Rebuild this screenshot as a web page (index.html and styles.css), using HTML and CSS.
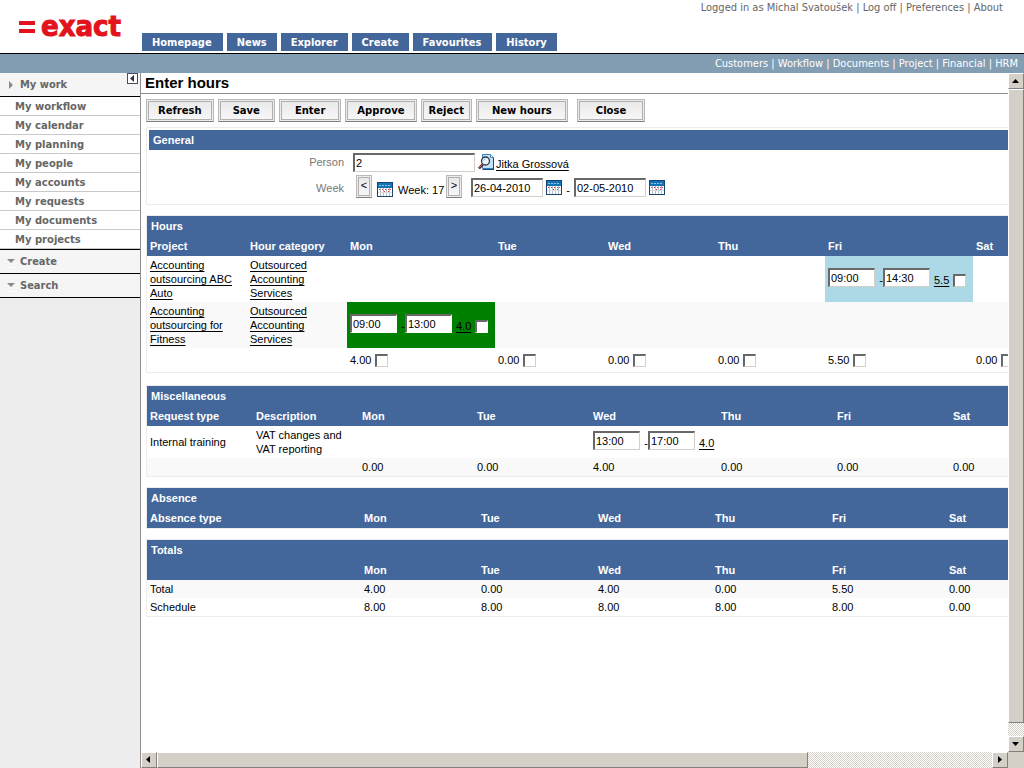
FILE: index.html
```html
<!DOCTYPE html>
<html lang="en">
<head>
<meta charset="utf-8">
<title>Enter hours</title>
<link rel="stylesheet" href="styles.css">
</head>
<body>
<svg class="sprite" aria-hidden="true">
  <symbol id="calendar" viewBox="0 0 16 15">
    <rect width="16" height="15" fill="#17456f"/>
    <rect x="1" y="1" width="14" height="5" fill="#1673b5"/>
    <path d="M2 3.500h12" stroke="#8cc4ea" stroke-dasharray="2 1"/>
    <rect x="1" y="6" width="14" height="8" fill="#fff"/>
    <path d="M3.500 6v8M6.500 6v8M9.500 6v8M12.500 6v8" stroke="#b9bec6"/>
    <path d="M1 10.500h14" stroke="#d8dce0"/>
    <path d="M2 7.500h1M5 7.500h1M8 7.500h1M11 7.500h1M7 9.500h1M11 9.500h1M13 7.500h1" stroke="#c8485a"/>
  </symbol>
  <symbol id="lookup" viewBox="0 0 16 16">
    <path d="M4.500.500h8l3 3v11h-11z" fill="#c4e2f8" stroke="#3d80b5"/>
    <path d="M4.500 15.500h11.500M15.500 4v11" stroke="#134a7c" fill="none"/>
    <path d="M12.500.500v3h3" fill="#fff" stroke="#3d80b5"/>
    <circle cx="7.500" cy="7" r="4" fill="#e9f7ff" stroke="#30343c" stroke-width="1.300"/>
    <path d="M5.500 7a2 2 0 0 1 2-2" stroke="#7fc0ee" fill="none"/>
    <path d="M4.500 10.500 1 14.500" stroke="#5a1712" stroke-width="2.600"/>
    <path d="M4.300 10.500 1.200 13.800" stroke="#d9765c"/>
  </symbol>
</svg>

<header class="top">
  <a class="logo" href="#"><svg width="16" height="13" viewBox="0 0 16 13" aria-hidden="true"><path d="M0 0h16v4H0zM0 8h16v4H0z" fill="#e2131d"/></svg><span>exact</span></a>
  <nav class="tabs">
    <a href="#">Homepage</a><a href="#">News</a><a href="#">Explorer</a><a href="#">Create</a><a href="#">Favourites</a><a href="#">History</a>
  </nav>
  <div class="account">Logged in as Michal Svatoušek | <a href="#">Log off</a> | <a href="#">Preferences</a> | <a href="#">About</a></div>
</header>
<nav class="modules"><a href="#">Customers</a> | <a href="#">Workflow</a> | <a href="#">Documents</a> | <a href="#">Project</a> | <a href="#">Financial</a> | <a href="#">HRM</a></nav>

<div class="body">
  <aside class="side">
    <h2 class="group"><svg width="10" height="12" viewBox="0 0 10 12" aria-hidden="true"><path d="M3 2v8l4-4z" fill="#8a8a8a"/></svg>My work
      <button class="collapse" aria-label="Collapse menu"><svg width="11" height="11" viewBox="0 0 11 11" aria-hidden="true"><rect x=".5" y=".5" width="10" height="10" fill="#fff" stroke="#4a4a60"/><path d="M7 2v7L3 5.500z" fill="#2e2e44"/></svg></button>
    </h2>
    <ul class="links">
      <li><a href="#">My workflow</a></li>
      <li><a href="#">My calendar</a></li>
      <li><a href="#">My planning</a></li>
      <li><a href="#">My people</a></li>
      <li><a href="#">My accounts</a></li>
      <li><a href="#">My requests</a></li>
      <li><a href="#">My documents</a></li>
      <li><a href="#">My projects</a></li>
    </ul>
    <h2 class="group ruled"><svg width="10" height="12" viewBox="0 0 10 12" aria-hidden="true"><path d="M1 3h8L5 7z" fill="#8a8a8a"/><path d="M0 11.500h10" stroke="#fff"/></svg>Create</h2>
    <h2 class="group"><svg width="10" height="12" viewBox="0 0 10 12" aria-hidden="true"><path d="M1 3h8L5 7z" fill="#8a8a8a"/><path d="M0 11.500h10" stroke="#fff"/></svg>Search</h2>
  </aside>

  <main class="pane">
    <div class="view">
      <h1>Enter hours</h1>
      <div class="content">
        <div class="actions">
          <button>Refresh</button><button>Save</button><button>Enter</button><button>Approve</button><button class="tight">Reject</button><button class="wide">New hours</button><button class="apart">Close</button>
        </div>

        <section class="general">
          <h2>General</h2>
          <div class="field">
            <label for="person">Person</label>
            <input id="person" class="person" value="2">
            <svg class="icon-lookup" aria-hidden="true"><use href="#lookup"/></svg>
            <a class="name" href="#">Jitka Grossová</a>
          </div>
          <div class="field week">
            <label for="from">Week</label>
            <button class="step" aria-label="Previous week">&lt;</button>
            <svg class="icon-cal low" aria-hidden="true"><use href="#calendar"/></svg>
            <span class="number">Week: 17</span>
            <button class="step next" aria-label="Next week">&gt;</button>
            <input id="from" class="date" value="26-04-2010">
            <svg class="icon-cal" aria-hidden="true"><use href="#calendar"/></svg>
            <span class="dash">-</span>
            <input class="date" aria-label="Week end" value="02-05-2010">
            <svg class="icon-cal" aria-hidden="true"><use href="#calendar"/></svg>
          </div>
        </section>

        <table class="sheet hours">
          <colgroup><col class="w100"><col class="w100"><col class="w148"><col class="w110"><col class="w110"><col class="w110"><col class="w148"><col></colgroup>
          <thead>
            <tr><th class="title" colspan="8">Hours</th></tr>
            <tr><th>Project</th><th>Hour category</th><th>Mon</th><th>Tue</th><th>Wed</th><th>Thu</th><th>Fri</th><th>Sat</th></tr>
          </thead>
          <tbody>
            <tr>
              <td><a href="#">Accounting outsourcing ABC Auto</a></td><td><a href="#">Outsourced Accounting Services</a></td>
              <td></td><td></td><td></td><td></td>
              <td class="open"><div class="entry"><input aria-label="Start" value="09:00"><span>-</span><input aria-label="End" value="14:30"><a href="#">5.5</a><input type="checkbox" aria-label="Select"></div></td>
              <td></td>
            </tr>
            <tr class="alt">
              <td><a href="#">Accounting outsourcing for Fitness</a></td><td><a href="#">Outsourced Accounting Services</a></td>
              <td class="done"><div class="entry"><input aria-label="Start" value="09:00"><span>-</span><input aria-label="End" value="13:00"><a href="#">4.0</a><input type="checkbox" aria-label="Select"></div></td>
              <td></td><td></td><td></td><td></td><td></td>
            </tr>
            <tr class="sum">
              <td></td><td></td>
              <td><label>4.00 <input type="checkbox"></label></td>
              <td><label>0.00 <input type="checkbox"></label></td>
              <td><label>0.00 <input type="checkbox"></label></td>
              <td><label>0.00 <input type="checkbox"></label></td>
              <td><label>5.50 <input type="checkbox"></label></td>
              <td><label>0.00 <input type="checkbox"></label></td>
            </tr>
          </tbody>
        </table>

        <table class="sheet">
          <colgroup><col class="w106"><col class="w106"><col class="w115"><col class="w116"><col class="w128"><col class="w116"><col class="w116"><col></colgroup>
          <thead>
            <tr><th class="title" colspan="8">Miscellaneous</th></tr>
            <tr><th>Request type</th><th>Description</th><th>Mon</th><th>Tue</th><th>Wed</th><th>Thu</th><th>Fri</th><th>Sat</th></tr>
          </thead>
          <tbody>
            <tr>
              <td>Internal training</td><td>VAT changes and VAT reporting</td><td></td><td></td>
              <td><div class="entry"><input aria-label="Start" value="13:00"><span>-</span><input aria-label="End" value="17:00"><a href="#">4.0</a></div></td>
              <td></td><td></td><td></td>
            </tr>
            <tr class="alt"><td></td><td></td><td>0.00</td><td>0.00</td><td>4.00</td><td>0.00</td><td>0.00</td><td>0.00</td></tr>
          </tbody>
        </table>

        <table class="sheet">
          <colgroup><col class="w214"><col class="w117"><col class="w117"><col class="w117"><col class="w117"><col class="w117"><col></colgroup>
          <thead>
            <tr><th class="title" colspan="7">Absence</th></tr>
            <tr><th>Absence type</th><th>Mon</th><th>Tue</th><th>Wed</th><th>Thu</th><th>Fri</th><th>Sat</th></tr>
          </thead>
        </table>

        <table class="sheet">
          <colgroup><col class="w214"><col class="w117"><col class="w117"><col class="w117"><col class="w117"><col class="w117"><col></colgroup>
          <thead>
            <tr><th class="title" colspan="7">Totals</th></tr>
            <tr><th></th><th>Mon</th><th>Tue</th><th>Wed</th><th>Thu</th><th>Fri</th><th>Sat</th></tr>
          </thead>
          <tbody>
            <tr class="alt"><td>Total</td><td>4.00</td><td>0.00</td><td>4.00</td><td>0.00</td><td>5.50</td><td>0.00</td></tr>
            <tr><td>Schedule</td><td>8.00</td><td>8.00</td><td>8.00</td><td>8.00</td><td>8.00</td><td>0.00</td></tr>
          </tbody>
        </table>
      </div>
    </div>

    <div class="bar vertical" aria-hidden="true">
      <span class="arrow"><svg width="8" height="8" viewBox="0 0 8 8"><path d="M0 6h7L3.500 2z"/></svg></span>
      <span class="track"><span class="thumb"></span></span>
      <span class="arrow"><svg width="8" height="8" viewBox="0 0 8 8"><path d="M0 2h7L3.500 6z"/></svg></span>
    </div>
    <div class="bar horizontal" aria-hidden="true">
      <span class="arrow"><svg width="8" height="8" viewBox="0 0 8 8"><path d="M5 0v7L1 3.500z"/></svg></span>
      <span class="track"><span class="thumb"></span></span>
      <span class="arrow"><svg width="8" height="8" viewBox="0 0 8 8"><path d="M2 0v7l4-3.500z"/></svg></span>
    </div>
    <div class="corner"></div>
  </main>
</div>
</body>
</html>
```
FILE: styles.css
```css
* { box-sizing: border-box; }

body {
  margin: 0;
  height: 100vh;
  display: flex;
  flex-direction: column;
  overflow: hidden;
  background: #fff;
  color: #000;
  font: 11px/14px "Liberation Sans", Arial, sans-serif;
}

h1, h2, ul { margin: 0; padding: 0; }
input, button { font: inherit; color: #000; margin: 0; }
.sprite { display: none; }

/* header */
.top {
  height: 54px;
  flex: none;
  display: flex;
  border-bottom: 1px solid #000;
  font-family: "DejaVu Sans Condensed", Tahoma, sans-serif;
}
.logo {
  width: 142px;
  padding: 11px 0 0 19px;
  display: flex;
  align-items: center;
  align-self: flex-start;
  gap: 6px;
  color: #e2131d;
  font: bold 29px/30px "DejaVu Sans Condensed", Tahoma, sans-serif;
  -webkit-text-stroke: 1px #e2131d;
  text-decoration: none;
}
.logo svg { margin-top: 2px; }
.tabs { display: flex; gap: 4px; align-self: flex-end; padding-bottom: 2px; }
.tabs a {
  padding: 1px 10px 0;
  background: #44679b;
  color: #fff;
  font-weight: bold;
  line-height: 17px;
  text-decoration: none;
}
.tabs a:nth-child(4n + 1) { padding-right: 11px; }
.account { margin-left: auto; padding: 1px 21px 0 0; color: #666; }
.account a, .modules a { color: inherit; text-decoration: none; }
.modules {
  flex: none;
  padding: 1px 6px 0 0;
  background: #839db3;
  color: #fff;
  font-family: "DejaVu Sans Condensed", Tahoma, sans-serif;
  line-height: 18px;
  text-align: right;
}

.body { flex: 1; min-height: 0; display: flex; }

/* side menu */
.side {
  width: 141px;
  flex: none;
  background: #ededed;
  border-right: 1px solid #958c8f;
}
.group {
  position: relative;
  height: 24px;
  display: flex;
  align-items: center;
  gap: 4px;
  padding: 1px 0 0 6px;
  border-bottom: 1px solid #000;
  background: #f5f5f5;
  color: #666;
  font: bold 11px/14px "DejaVu Sans Condensed", Tahoma, sans-serif;
}
.ruled { height: 25px; border-top: 1px solid #000; }
.collapse {
  position: absolute;
  top: 0;
  right: 2px;
  padding: 0;
  border: 0;
  background: none;
  display: flex;
}
.links { list-style: none; background: #fff; }
.links li {
  height: 19px;
  padding: 1px 0 0 15px;
  border-bottom: 1px solid #c9c9c9;
  font: bold 10px/17px "DejaVu Sans", Verdana, sans-serif;
}
.links a { color: #666; text-decoration: none; }

/* main pane */
.pane {
  flex: 1;
  min-width: 0;
  display: grid;
  grid-template: minmax(0, 1fr) 16px / minmax(0, 1fr) 16px;
}
.view { overflow: hidden; }
h1 {
  padding-left: 4px;
  border-bottom: 1px solid #8e8e8e;
  font: bold 15px/20px "Liberation Sans", Arial, sans-serif;
}
.content { min-width: 1112px; padding: 5px; }

.actions { display: flex; gap: 4px; }
.actions button, .step {
  border: 1px solid #b8b8b8;
  border-bottom-color: #808080;
  background: linear-gradient(#e8e8e8, #f8f8f8);
  box-shadow: inset 0 0 0 1px #ececec, inset 0 0 0 2px #b0b0b0;
}
.actions button {
  height: 23px;
  padding: 0 11px;
  font: bold 10px/14px "DejaVu Sans", Verdana, sans-serif;
}
.actions button:nth-child(2) { padding: 0 14px; }
.actions button:nth-child(3) { padding: 0 15px; }
.actions .tight { padding: 0 7px; }
.actions .wide { padding: 0 15px; }
.actions .apart { margin-left: 5px; padding: 0 18px; }

.general {
  margin: 5px 0 10px;
  padding: 2px 2px 3px;
  border: 1px solid #ececec;
}
.general h2 {
  padding-left: 4px;
  background: #44679b;
  color: #fff;
  font: bold 11px/20px "Liberation Sans", Arial, sans-serif;
}
.field { height: 24px; display: flex; align-items: center; }
.field label { width: 195px; margin-right: 9px; color: #777; text-align: right; }
.week { height: 27px; }
.person { width: 122px; margin-right: 3px; }
.date { width: 72px; }
.icon-lookup { width: 16px; height: 16px; margin-right: 2px; }
.name { margin-top: 3px; }
.icon-cal { width: 16px; height: 15px; margin-left: 3px; }
.low { margin: 4px 5px 0; }
.dash { width: 12px; padding-top: 4px; text-align: center; }
.number { width: 48px; padding-top: 4px; }
.step { width: 16px; height: 23px; margin: 0 0 2px 3px; padding: 0 0 4px; line-height: 14px; }
.next { margin: 0 9px 2px 0; }
.sheet a, .name { color: #000; text-decoration: underline; text-underline-offset: 2px; }

input {
  height: 19px;
  padding: 0 1px;
  border: solid;
  border-width: 2px 1px 1px 2px;
  border-color: #686868 #d4d0c8 #d4d0c8 #686868;
  border-radius: 0;
  background: #fff;
  line-height: 14px;
}
input[type="checkbox"] {
  appearance: none;
  flex: none;
  width: 13px;
  height: 13px;
  padding: 0;
}

/* data tables */
.sheet {
  width: 100%;
  margin-bottom: 10px;
  border: 1px solid #ececec;
  border-spacing: 0;
  table-layout: fixed;
}
.hours { margin-bottom: 12px; }
.sheet th {
  height: 20px;
  padding: 0 3px;
  background: #44679b;
  color: #fff;
  text-align: left;
}
.sheet th.title { padding-left: 4px; }
.sheet td { height: 18px; padding: 2px 3px; }
.alt { background: #f9f9f9; }
.w100 { width: 100px; }
.w106 { width: 106px; }
.w110 { width: 110px; }
.w115 { width: 115px; }
.w116 { width: 116px; }
.w117 { width: 117px; }
.w128 { width: 128px; }
.w148 { width: 148px; }
.w214 { width: 214px; }
.sum label { display: flex; align-items: center; gap: 4px; height: 20px; }
.entry { display: flex; align-items: center; padding-bottom: 4px; }
.entry input:not([type]) { flex: none; width: 47px; }
.entry span { flex: none; width: 8px; padding-top: 6px; text-align: right; line-height: 12px; }
.entry a { margin: 0 4px; padding-top: 6px; line-height: 12px; }
.entry input[type="checkbox"] { margin-top: 6px; }
.hours .open { background: #add8e6; }
.hours .done { background: #008000; }
.done input { border-right-color: #fff; border-bottom-color: #fff; }

/* scroll bars */
.bar { display: flex; background: repeating-conic-gradient(#d4d0c8 0 25%, #fff 0 50%) 0 0 / 2px 2px; }
.vertical { flex-direction: column; }
.track { flex: 1; display: flex; flex-direction: inherit; }
.arrow, .thumb {
  background: #d4d0c8;
  border: 1px solid;
  border-color: #fff #808080 #808080 #fff;
}
.arrow { width: 16px; height: 16px; display: flex; align-items: center; justify-content: center; }
.vertical .thumb { height: 98%; }
.horizontal .thumb { width: 78%; }
.corner { background: #d4d0c8; }
```
